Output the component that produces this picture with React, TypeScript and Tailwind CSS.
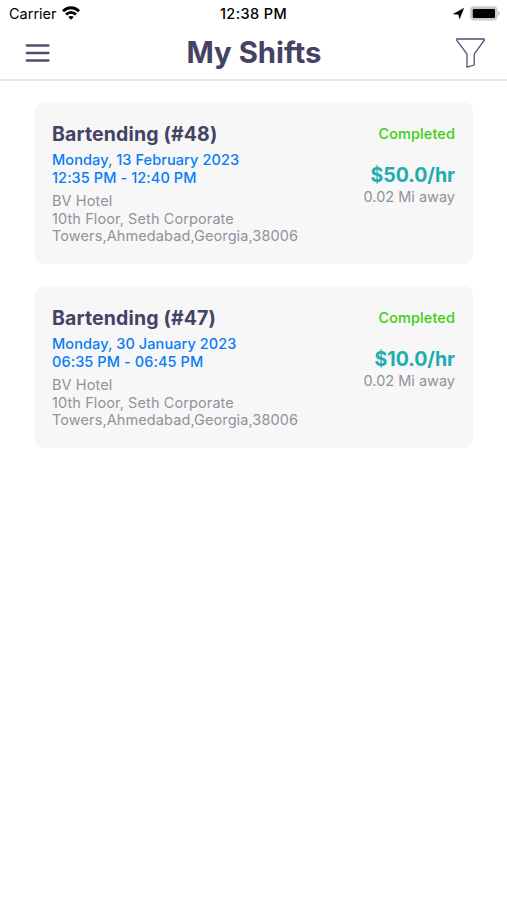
type Shift = {
  id: number;
  role: string;
  date: string;
  time: string;
  venue: string;
  address: string[];
  status: string;
  rate: string;
  distance: string;
};

const shifts: Shift[] = [
  {
    id: 48,
    role: "Bartending",
    date: "Monday, 13 February 2023",
    time: "12:35 PM - 12:40 PM",
    venue: "BV Hotel",
    address: ["10th Floor, Seth Corporate", "Towers,Ahmedabad,Georgia,38006"],
    status: "Completed",
    rate: "$50.0/hr",
    distance: "0.02 Mi away",
  },
  {
    id: 47,
    role: "Bartending",
    date: "Monday, 30 January 2023",
    time: "06:35 PM - 06:45 PM",
    venue: "BV Hotel",
    address: ["10th Floor, Seth Corporate", "Towers,Ahmedabad,Georgia,38006"],
    status: "Completed",
    rate: "$10.0/hr",
    distance: "0.02 Mi away",
  },
];

function StatusBar() {
  return (
    <div className="grid grid-cols-3 items-center h-[27px] px-[7px] text-[14.5px] text-black">
      <div className="flex items-center gap-[6px] pl-[2px]">
        <span>Carrier</span>
        <svg width="18" height="14" viewBox="0 0 18 14" className="-ml-px -mt-[2px]" fill="none" stroke="black" strokeWidth="2.8">
          <path d="M1 5.2 C5.5 0.6 12.5 0.6 17 5.2" />
          <path d="M4 8.6 C7 5.7 11 5.7 14 8.6" />
          <path d="M9 13.8 L6.2 11 C7.8 9.5 10.2 9.5 11.8 11 Z" fill="black" stroke="none" />
        </svg>
      </div>
      <span className="text-center font-medium tracking-[0.4px]">12:38 PM</span>
      <div className="flex items-center justify-end gap-[6px]">
        <svg width="11" height="11" viewBox="0 0 11 11" fill="black" stroke="black" strokeWidth="0.6" strokeLinejoin="round">
          <path d="M10.6 0.4 L6.6 10.6 L5.6 6.3 L0.5 6 Z" />
        </svg>
        <svg width="30" height="15" viewBox="0 0 30 15" className="-mt-px">
          <rect x="0.2" y="0.2" width="27.4" height="14.4" rx="4" fill="#c9c9c9" />
          <rect x="2.8" y="3" width="22.2" height="9" rx="1.2" fill="black" />
          <path d="M28.2 5 C30.2 5.8 30.2 9.2 28.2 10 Z" fill="#bdbdbd" />
        </svg>
      </div>
    </div>
  );
}

function Header() {
  return (
    <header className="flex items-center justify-between h-[54px] pb-px pl-[25px] pr-[22px] border-b-2 border-[#e6e6e6]">
      <button aria-label="Menu">
        <svg width="25" height="20" viewBox="0 0 25 20" stroke="#504e6e" strokeWidth="2.3" strokeLinecap="round">
          <path d="M1.7 2.5 H23.5 M1.7 10 H23.5 M1.7 17.5 H23.5" />
        </svg>
      </button>
      <h1 className="pl-[2px] text-[29.3px] font-bold">My Shifts</h1>
      <button aria-label="Filter">
        <svg width="29" height="30" viewBox="0 0 29 30" fill="none" stroke="#504e6e" strokeWidth="1.3" strokeLinejoin="round">
          <path d="M0.8 1 H28.2 V2.4 L18.2 16.2 V27 L11 29.2 V16.2 L0.8 2.4 Z" />
        </svg>
      </button>
    </header>
  );
}

function ShiftCard({ shift }: { shift: Shift }) {
  return (
    <div className="flex justify-between h-[162px] rounded-[9px] bg-[#f7f7f7] pl-[17px] pr-[18px] pt-[20px]">
      <div>
        <h2 className="text-[19.5px] leading-[24px] tracking-[0.14px] font-bold">{shift.role} (#{shift.id})</h2>
        <div className="mt-[5px] text-[14.5px] leading-[17.5px] tracking-[0.09px] font-medium text-[#087df5]">
          <p>{shift.date}</p>
          <p>{shift.time}</p>
        </div>
        <div className="mt-[6px] text-[14.5px] leading-[17.7px] tracking-[0.1px] text-[#92929b]">
          <p>{shift.venue}</p>
          {shift.address.map((line) => <p key={line}>{line}</p>)}
        </div>
      </div>
      <div className="text-right">
        <p className="text-[14.5px] leading-[24px] tracking-[0.1px] font-medium text-[#3bcf12]">{shift.status}</p>
        <p className="mt-[17px] text-[19.5px] leading-[24px] font-bold text-[#20adad]">{shift.rate}</p>
        <p className="mt-[1px] text-[14.5px] leading-[18px] text-[#92929b]">{shift.distance}</p>
      </div>
    </div>
  );
}

export default function App() {
  return (
    <div className="min-h-screen bg-white text-[#454365] font-[Inter,sans-serif]">
      <StatusBar />
      <Header />
      <main className="flex flex-col gap-[22px] pl-[35px] pr-[34px] pt-[21px]">
        {shifts.map((shift) => <ShiftCard key={shift.id} shift={shift} />)}
      </main>
    </div>
  );
}
